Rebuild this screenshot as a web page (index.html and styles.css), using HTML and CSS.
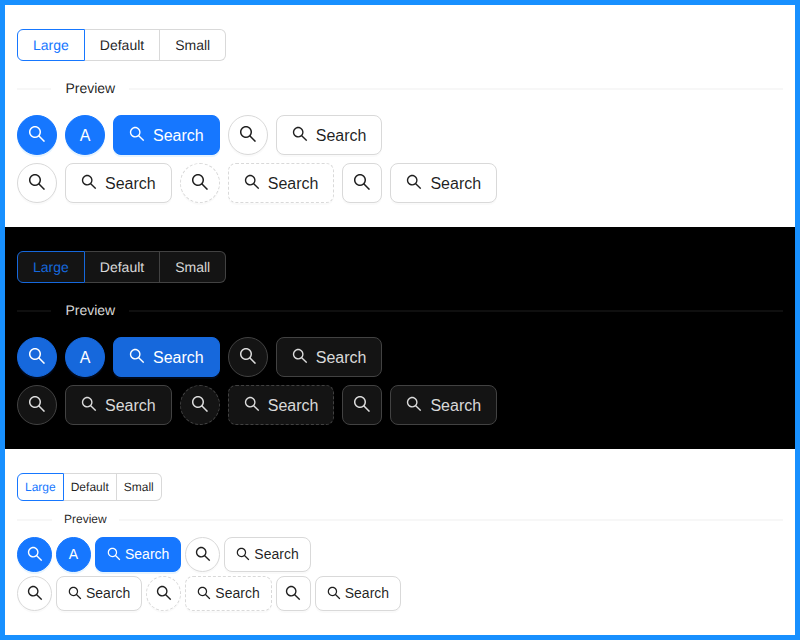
FILE: index.html
```html
<!DOCTYPE html>
<html lang="en">
<head>
  <meta charset="UTF-8">
  <title>Button sizes</title>
  <link rel="stylesheet" href="styles.css">
</head>
<body>

<svg class="sprite">
  <symbol id="search" viewBox="64 64 896 896">
    <path d="M909.6 854.5L649.9 594.8C690.2 542.7 712 479 712 412c0-80.2-31.3-155.4-87.9-212.1-56.6-56.7-132-87.9-212.1-87.9s-155.5 31.3-212.1 87.9C143.2 256.5 112 331.8 112 412c0 80.1 31.3 155.5 87.9 212.1C256.5 680.8 331.8 712 412 712c67 0 130.6-21.8 182.7-62l259.7 259.6a8.2 8.2 0 0 0 11.6 0l43.6-43.5a8.2 8.2 0 0 0 0-11.6zM570.4 570.4C528 612.7 471.8 636 412 636s-116-23.3-158.4-65.6C211.3 528 188 471.8 188 412s23.3-116.1 65.6-158.4C296 211.3 352.2 188 412 188s116.1 23.2 158.4 65.6S636 352.2 636 412s-23.3 116.1-65.6 158.4z"/>
  </symbol>
</svg>

<!-- Light, large -->
<section class="demo">
  <div class="radio-group">
    <label class="radio active">Large</label>
    <label class="radio">Default</label>
    <label class="radio">Small</label>
  </div>
  <div class="divider"><span class="divider-text">Preview</span></div>
  <div class="row">
    <button class="btn primary circle"><span class="icon"><svg><use href="#search"/></svg></span></button>
    <button class="btn primary circle">A</button>
    <button class="btn primary"><span class="icon"><svg><use href="#search"/></svg></span><span class="label">Search</span></button>
    <button class="btn circle"><span class="icon"><svg><use href="#search"/></svg></span></button>
    <button class="btn"><span class="icon"><svg><use href="#search"/></svg></span><span class="label">Search</span></button>
  </div>
  <div class="row">
    <button class="btn circle"><span class="icon"><svg><use href="#search"/></svg></span></button>
    <button class="btn"><span class="icon"><svg><use href="#search"/></svg></span><span class="label">Search</span></button>
    <button class="btn dashed circle"><span class="icon"><svg><use href="#search"/></svg></span></button>
    <button class="btn dashed"><span class="icon"><svg><use href="#search"/></svg></span><span class="label">Search</span></button>
    <button class="btn square"><span class="icon"><svg><use href="#search"/></svg></span></button>
    <button class="btn"><span class="icon"><svg><use href="#search"/></svg></span><span class="label">Search</span></button>
  </div>
</section>

<!-- Dark, large -->
<section class="demo dark">
  <div class="radio-group">
    <label class="radio active">Large</label>
    <label class="radio">Default</label>
    <label class="radio">Small</label>
  </div>
  <div class="divider"><span class="divider-text">Preview</span></div>
  <div class="row">
    <button class="btn primary circle"><span class="icon"><svg><use href="#search"/></svg></span></button>
    <button class="btn primary circle">A</button>
    <button class="btn primary"><span class="icon"><svg><use href="#search"/></svg></span><span class="label">Search</span></button>
    <button class="btn circle"><span class="icon"><svg><use href="#search"/></svg></span></button>
    <button class="btn"><span class="icon"><svg><use href="#search"/></svg></span><span class="label">Search</span></button>
  </div>
  <div class="row">
    <button class="btn circle"><span class="icon"><svg><use href="#search"/></svg></span></button>
    <button class="btn"><span class="icon"><svg><use href="#search"/></svg></span><span class="label">Search</span></button>
    <button class="btn dashed circle"><span class="icon"><svg><use href="#search"/></svg></span></button>
    <button class="btn dashed"><span class="icon"><svg><use href="#search"/></svg></span><span class="label">Search</span></button>
    <button class="btn square"><span class="icon"><svg><use href="#search"/></svg></span></button>
    <button class="btn"><span class="icon"><svg><use href="#search"/></svg></span><span class="label">Search</span></button>
  </div>
</section>

<!-- Light, compact -->
<section class="demo compact">
  <div class="radio-group">
    <label class="radio active">Large</label>
    <label class="radio">Default</label>
    <label class="radio">Small</label>
  </div>
  <div class="divider"><span class="divider-text">Preview</span></div>
  <div class="row">
    <button class="btn primary circle"><span class="icon"><svg><use href="#search"/></svg></span></button>
    <button class="btn primary circle">A</button>
    <button class="btn primary"><span class="icon"><svg><use href="#search"/></svg></span><span class="label">Search</span></button>
    <button class="btn circle"><span class="icon"><svg><use href="#search"/></svg></span></button>
    <button class="btn"><span class="icon"><svg><use href="#search"/></svg></span><span class="label">Search</span></button>
  </div>
  <div class="row">
    <button class="btn circle"><span class="icon"><svg><use href="#search"/></svg></span></button>
    <button class="btn"><span class="icon"><svg><use href="#search"/></svg></span><span class="label">Search</span></button>
    <button class="btn dashed circle"><span class="icon"><svg><use href="#search"/></svg></span></button>
    <button class="btn dashed"><span class="icon"><svg><use href="#search"/></svg></span><span class="label">Search</span></button>
    <button class="btn square"><span class="icon"><svg><use href="#search"/></svg></span></button>
    <button class="btn"><span class="icon"><svg><use href="#search"/></svg></span><span class="label">Search</span></button>
  </div>
</section>

</body>
</html>
```

FILE: styles.css
```css
* {
  box-sizing: border-box;
}
html, body {
  margin: 0;
  padding: 0;
}
body {
  width: 800px;
  height: 640px;
  border: 5px solid #1890ff;
  font-family: "Liberation Sans", Arial, sans-serif;
  text-rendering: geometricPrecision;
  background-color: #fff;
}
.sprite {
  display: none;
}

.demo {
  padding: 24px 12px;
  color: rgba(0, 0, 0, 0.88);
  background-color: #fff;
  --primary: #1677ff;
  --primary-shadow: rgba(5, 145, 255, 0.1);
  --line: #d9d9d9;
  --split: rgba(5, 5, 5, 0.03);
  --surface: #fff;
  --text: rgba(0, 0, 0, 0.88);
  --soft-shadow: rgba(0, 0, 0, 0.02);
}
.dark {
  color: rgba(255, 255, 255, 0.85);
  background-color: #000;
  --primary: #1668dc;
  --primary-shadow: rgba(0, 60, 180, 0.15);
  --line: #424242;
  --split: rgba(253, 253, 253, 0.06);
  --surface: #141414;
  --text: rgba(255, 255, 255, 0.85);
  --soft-shadow: rgba(0, 0, 0, 0.02);
}

/* Size switch */
.radio-group {
  display: flex;
  font-size: 14px;
  line-height: 30px;
}
.radio {
  padding: 0 15px;
  height: 32px;
  color: var(--text);
  background-color: var(--surface);
  border: 1px solid var(--line);
  border-left-width: 0;
}
.radio:first-child {
  border-left-width: 1px;
  border-radius: 6px 0 0 6px;
}
.radio:last-child {
  border-radius: 0 6px 6px 0;
}
.radio.active {
  color: var(--primary);
  border-color: var(--primary);
}

/* Divider */
.divider {
  display: flex;
  align-items: center;
  margin: 16px 0;
  font-size: 14px;
  line-height: 22px;
  white-space: nowrap;
}
.divider::before, .divider::after {
  content: "";
  border-top: 2px solid var(--split);
  transform: translateY(50%);
}
.divider::before {
  width: 5%;
}
.divider::after {
  width: 95%;
}
.divider-text {
  padding: 0 1em;
}

/* Buttons */
.row {
  display: flex;
  gap: 8px;
  margin-bottom: 8px;
}
.row:last-child {
  margin-bottom: 0;
}
.btn {
  height: 40px;
  padding: 7px 15px;
  font-family: inherit;
  font-size: 16px;
  line-height: 1.5714;
  white-space: nowrap;
  color: var(--text);
  background-color: var(--surface);
  border: 1px solid var(--line);
  border-radius: 8px;
  box-shadow: 0 2px 0 var(--soft-shadow);
  cursor: pointer;
}
.btn.primary {
  color: #fff;
  background-color: var(--primary);
  border-color: var(--primary);
  box-shadow: 0 2px 0 var(--primary-shadow);
}
.btn.dashed {
  border-style: dashed;
}
.btn.circle, .btn.square {
  width: 40px;
  padding-left: 0;
  padding-right: 0;
}
.btn.circle {
  border-radius: 50%;
}
.btn.circle .icon, .btn.square .icon {
  font-size: 18px;
}
.icon {
  display: inline-flex;
  line-height: 0;
  vertical-align: -1px;
}
.btn.circle .icon, .btn.square .icon {
  vertical-align: -0.125em;
}
.icon svg {
  width: 1em;
  height: 1em;
  fill: currentColor;
}
.label {
  margin-left: 8px;
}

/* Compact variant */
.compact .radio-group {
  font-size: 12px;
  line-height: 26px;
}
.compact .radio {
  padding: 0 7px;
  height: 28px;
}
.compact .divider {
  margin: 8px 0;
  font-size: 12px;
  line-height: 20px;
}
.compact .row {
  gap: 4px;
  margin-bottom: 4px;
}
.compact .row:last-child {
  margin-bottom: 0;
}
.compact .btn {
  height: 35px;
  padding: 5px 11px;
  font-size: 14px;
}
.compact .btn.circle, .compact .btn.square {
  width: 35px;
  padding-left: 0;
  padding-right: 0;
}
.compact .btn.circle .icon, .compact .btn.square .icon {
  font-size: 16px;
  vertical-align: -0.2em;
}
.compact .icon {
  vertical-align: -0.2em;
}
.compact .label {
  margin-left: 4px;
}
```
